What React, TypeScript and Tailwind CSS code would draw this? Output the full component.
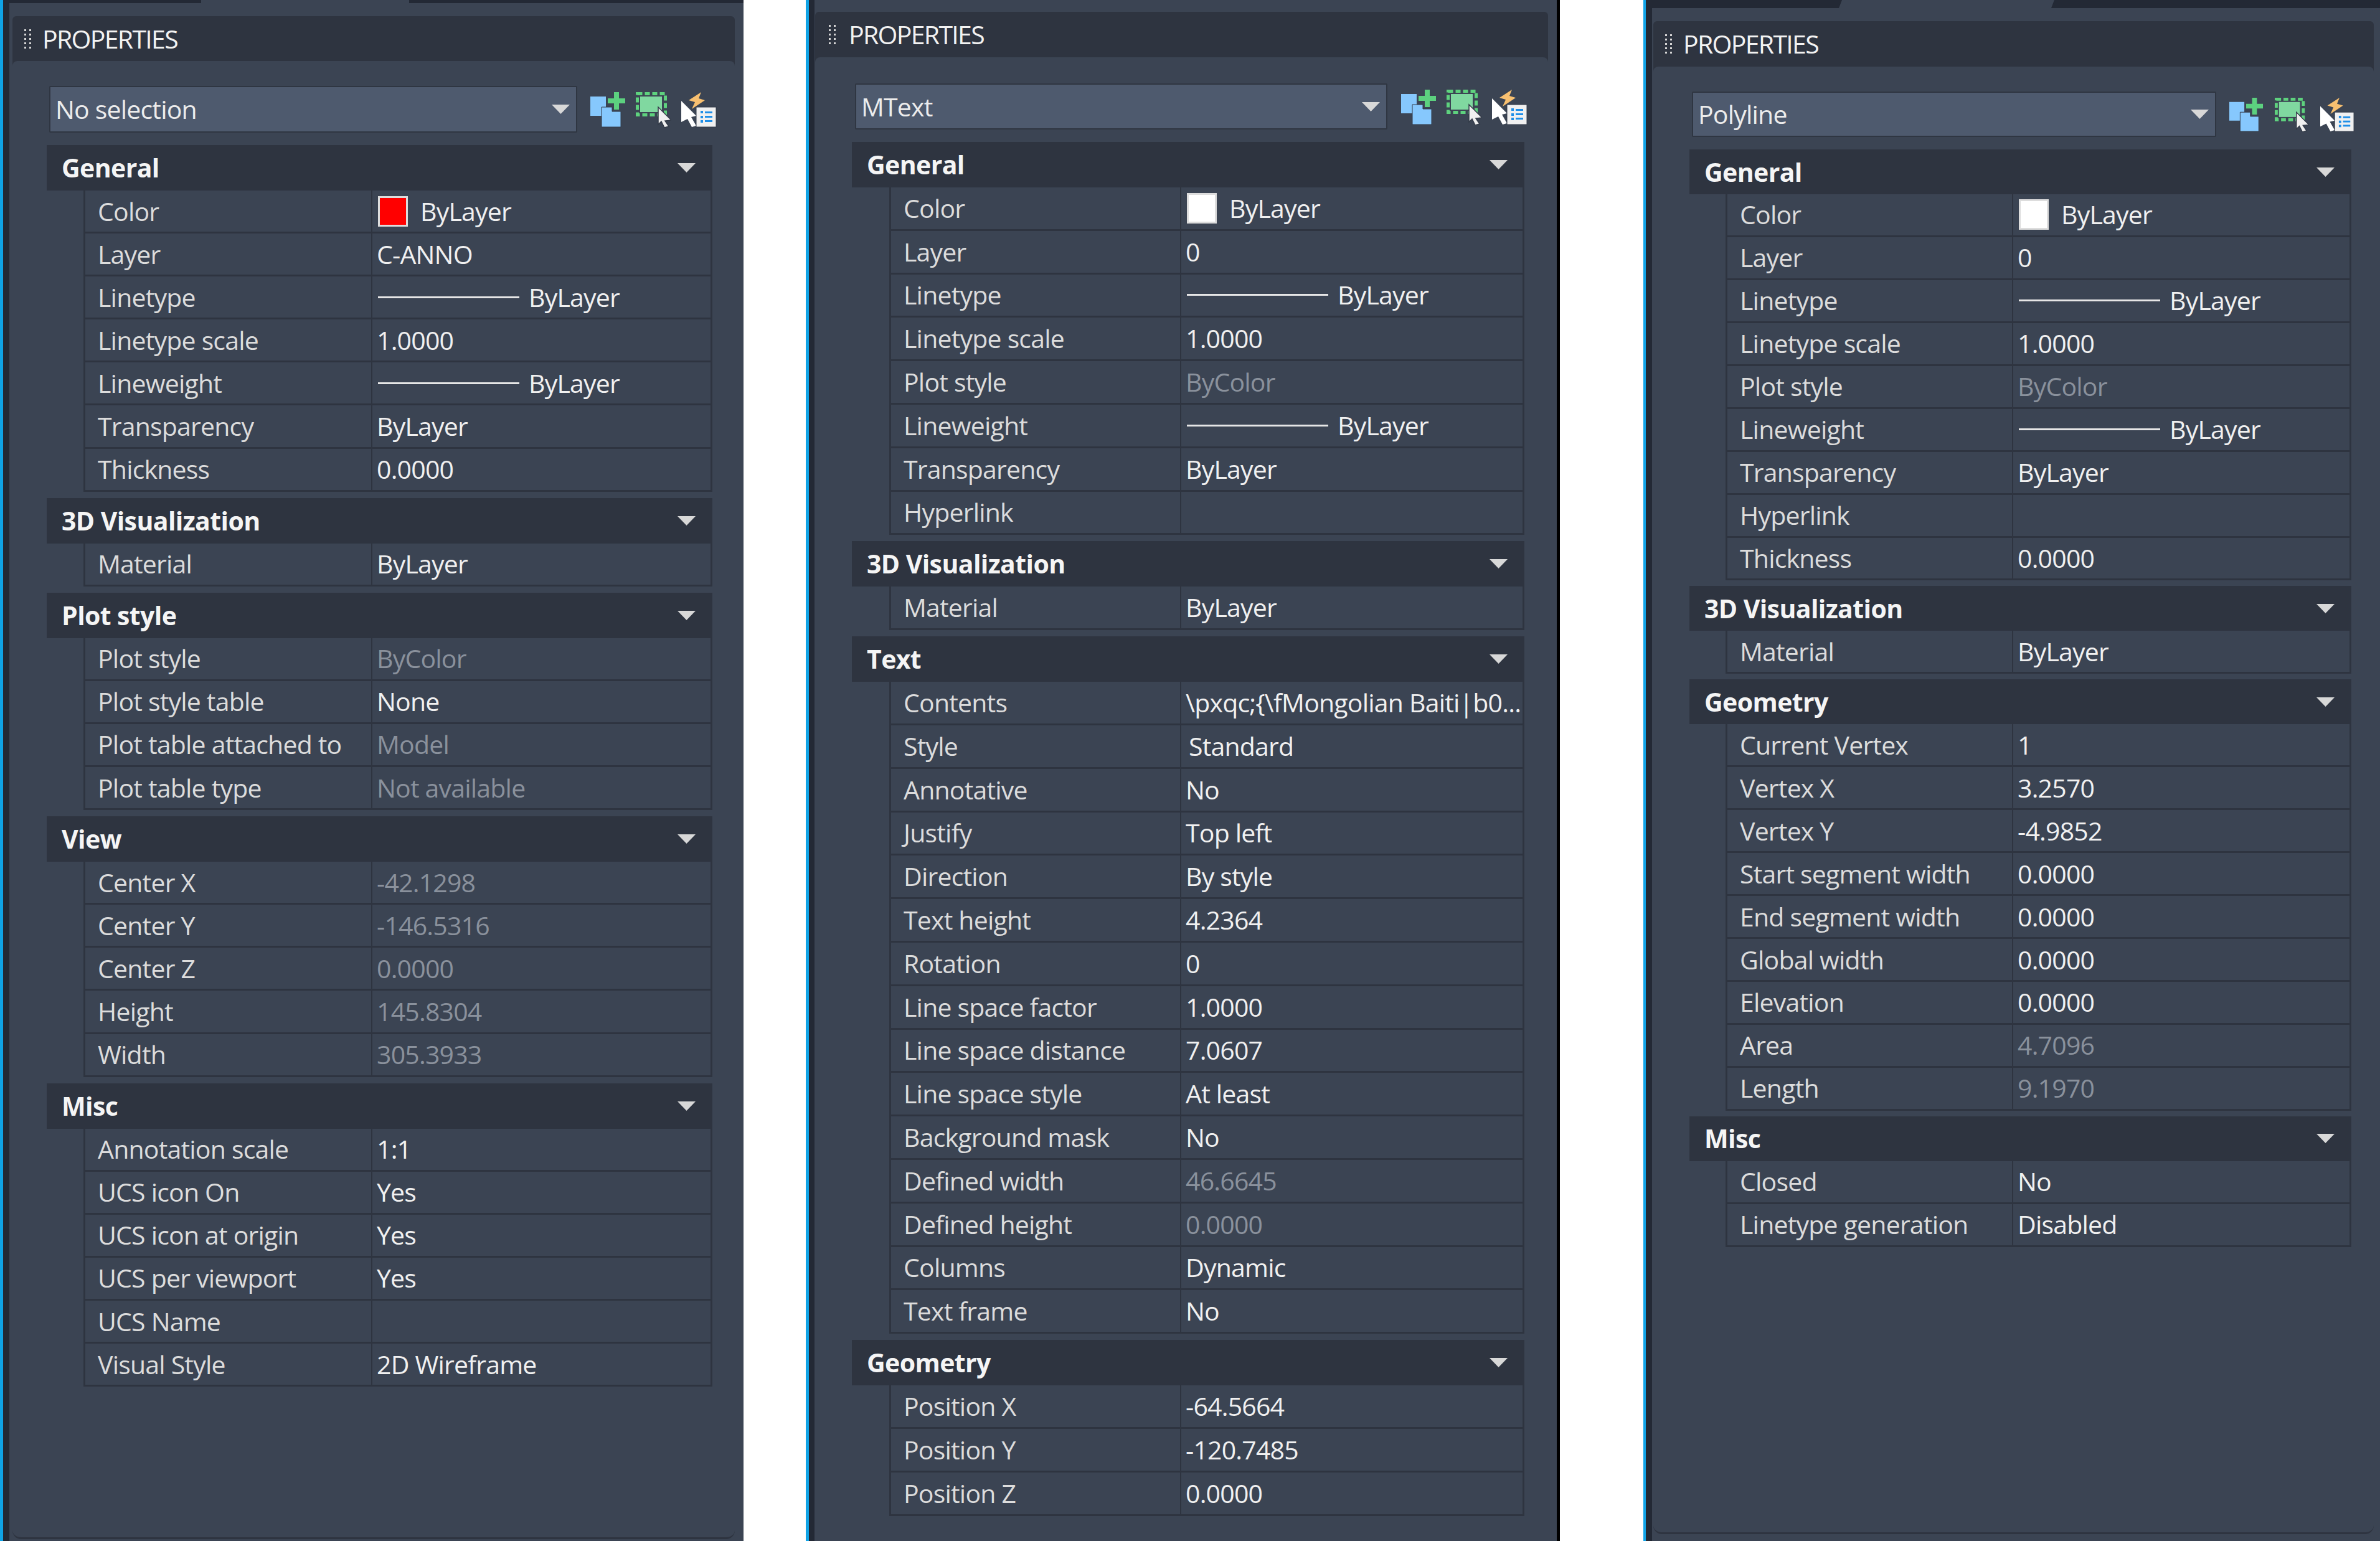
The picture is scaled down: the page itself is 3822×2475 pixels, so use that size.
import React from "react";

type Row = [string, string?, ("gray" | "line" | "red" | "white" | "indent")?];
type Group = { title: string; rows: Row[] };

const noSel: Group[] = [
  {
    title: "General",
    rows: [
      ["Color", "ByLayer", "red"],
      ["Layer", "C-ANNO"],
      ["Linetype", "ByLayer", "line"],
      ["Linetype scale", "1.0000"],
      ["Lineweight", "ByLayer", "line"],
      ["Transparency", "ByLayer"],
      ["Thickness", "0.0000"],
    ],
  },
  { title: "3D Visualization", rows: [["Material", "ByLayer"]] },
  {
    title: "Plot style",
    rows: [
      ["Plot style", "ByColor", "gray"],
      ["Plot style table", "None"],
      ["Plot table attached to", "Model", "gray"],
      ["Plot table type", "Not available", "gray"],
    ],
  },
  {
    title: "View",
    rows: [
      ["Center X", "-42.1298", "gray"],
      ["Center Y", "-146.5316", "gray"],
      ["Center Z", "0.0000", "gray"],
      ["Height", "145.8304", "gray"],
      ["Width", "305.3933", "gray"],
    ],
  },
  {
    title: "Misc",
    rows: [
      ["Annotation scale", "1:1"],
      ["UCS icon On", "Yes"],
      ["UCS icon at origin", "Yes"],
      ["UCS per viewport", "Yes"],
      ["UCS Name"],
      ["Visual Style", "2D Wireframe"],
    ],
  },
];

const mtext: Group[] = [
  {
    title: "General",
    rows: [
      ["Color", "ByLayer", "white"],
      ["Layer", "0"],
      ["Linetype", "ByLayer", "line"],
      ["Linetype scale", "1.0000"],
      ["Plot style", "ByColor", "gray"],
      ["Lineweight", "ByLayer", "line"],
      ["Transparency", "ByLayer"],
      ["Hyperlink"],
    ],
  },
  { title: "3D Visualization", rows: [["Material", "ByLayer"]] },
  {
    title: "Text",
    rows: [
      ["Contents", "\\pxqc;{\\fMongolian Baiti|b0..."],
      ["Style", "Standard", "indent"],
      ["Annotative", "No"],
      ["Justify", "Top left"],
      ["Direction", "By style"],
      ["Text height", "4.2364"],
      ["Rotation", "0"],
      ["Line space factor", "1.0000"],
      ["Line space distance", "7.0607"],
      ["Line space style", "At least"],
      ["Background mask", "No"],
      ["Defined width", "46.6645", "gray"],
      ["Defined height", "0.0000", "gray"],
      ["Columns", "Dynamic"],
      ["Text frame", "No"],
    ],
  },
  {
    title: "Geometry",
    rows: [
      ["Position X", "-64.5664"],
      ["Position Y", "-120.7485"],
      ["Position Z", "0.0000"],
    ],
  },
];

const polyline: Group[] = [
  {
    title: "General",
    rows: [
      ["Color", "ByLayer", "white"],
      ["Layer", "0"],
      ["Linetype", "ByLayer", "line"],
      ["Linetype scale", "1.0000"],
      ["Plot style", "ByColor", "gray"],
      ["Lineweight", "ByLayer", "line"],
      ["Transparency", "ByLayer"],
      ["Hyperlink"],
      ["Thickness", "0.0000"],
    ],
  },
  { title: "3D Visualization", rows: [["Material", "ByLayer"]] },
  {
    title: "Geometry",
    rows: [
      ["Current Vertex", "1"],
      ["Vertex X", "3.2570"],
      ["Vertex Y", "-4.9852"],
      ["Start segment width", "0.0000"],
      ["End segment width", "0.0000"],
      ["Global width", "0.0000"],
      ["Elevation", "0.0000"],
      ["Area", "4.7096", "gray"],
      ["Length", "9.1970", "gray"],
    ],
  },
  {
    title: "Misc",
    rows: [
      ["Closed", "No"],
      ["Linetype generation", "Disabled"],
    ],
  },
];

function Arrow() {
  return (
    <svg viewBox="0 0 29 15" className="h-[15px] w-[29px] shrink-0">
      <path d="M0 0H29L14.5 15Z" fill="#d8d8d8" />
    </svg>
  );
}

function Grip() {
  const ys = [0, 7, 14, 21, 28];
  return (
    <svg viewBox="0 0 11 31" className="h-[31px] w-[11px] shrink-0">
      {ys.map((y) => (
        <g key={y} fill="#d6d6d6">
          <rect x="0" y={y} width="3" height="3" />
          <rect x="8" y={y} width="3" height="3" />
        </g>
      ))}
    </svg>
  );
}

function AddIcon({ cls }: { cls: string }) {
  return (
    <svg viewBox="0 0 57 57" className={cls}>
      <path d="M0 7H25V24H18V38H0Z" fill="#86c8fd" />
      <path d="M18 24H35V31H49V56H18Z" fill="#86c8fd" stroke="#333b48" strokeWidth="1" />
      <path d="M38 0H46V10H56V18H46V28H38V18H28V10H38Z" fill="#5cd17f" />
    </svg>
  );
}

function SelectIcon({ cls }: { cls: string }) {
  return (
    <svg viewBox="0 0 57 57" className={cls}>
      <rect x="2.5" y="2.5" width="45" height="34" fill="none" stroke="#5ed27e" strokeWidth="5" strokeDasharray="8 4" />
      <rect x="7" y="7" width="35" height="25" fill="#80d8a0" />
      <path d="M36 24L57 45L47 46L53 55L46 57L41 47L36 52Z" fill="#f0f0f0" stroke="#333b48" strokeWidth="1.5" />
    </svg>
  );
}

function QuickIcon({ cls }: { cls: string }) {
  return (
    <svg viewBox="0 0 57 57" className={cls}>
      <path d="M32 0L12 13L22 16L17 27L38 13L28 10Z" fill="#f8c070" />
      <path d="M0 14L24 38L16 40L24 54L17 56L10 43L0 48Z" fill="#ffffff" />
      <rect x="24" y="24" width="32" height="32" fill="#f0f0f0" stroke="#333b48" strokeWidth="1" />
      <g fill="#1f8fe8">
        <rect x="31" y="30" width="4" height="4" />
        <rect x="31" y="38" width="4" height="4" />
        <rect x="31" y="45" width="4" height="4" />
        <rect x="38" y="31" width="12" height="3" />
        <rect x="38" y="38" width="12" height="3" />
        <rect x="38" y="45" width="12" height="3" />
      </g>
    </svg>
  );
}

function Value({ row }: { row: Row }) {
  const [, value, kind] = row;
  if (kind === "line") {
    return (
      <div className="ml-[2px] flex items-center">
        <div className="h-[3px] w-[227px] bg-[#e6e6e6]" />
        <span className="ml-[15px]">{value}</span>
      </div>
    );
  }
  if (kind === "red" || kind === "white") {
    return (
      <div className="ml-[2px] flex items-center">
        <div className={`h-[49px] w-[48px] border-[3px] border-[#dddddd] ${kind === "red" ? "bg-[#ff0000]" : "bg-white"}`} />
        <span className="ml-[20px]">{value}</span>
      </div>
    );
  }
  if (kind === "indent") return <span className="ml-[5px]">{value}</span>;
  return <span className={kind === "gray" ? "text-[#8a919c]" : ""}>{value}</span>;
}

type Cfg = {
  name: string;
  groups: Group[];
  outer: string;
  rail: string;
  top?: React.ReactNode;
  titleBar: string;
  grip: string;
  body: string;
  dropRow: string;
  drop: string;
  iconGap: string;
  icon: string;
  groupWrap: string;
  head: string;
  rows: string;
  row: string;
  labelCell: string;
  valueCell: string;
  tableGap: string;
};

function Panel({ c }: { c: Cfg }) {
  return (
    <div className={`flex shrink-0 ${c.outer}`}>
      <div className={`shrink-0 bg-[#232935] ${c.rail}`} />
      <div className="flex min-w-0 flex-1 flex-col bg-[#3b4453]">
        {c.top}
        <div className={`flex shrink-0 items-center rounded-t-md bg-[#2e3440] ${c.titleBar}`}>
          <div className={c.grip}>
            <Grip />
          </div>
          <span className="tracking-[-1.7px] text-[#f2f2f2]">PROPERTIES</span>
        </div>
        <div className={`flex min-h-0 flex-1 flex-col ${c.body}`}>
          <div className="h-2 shrink-0 bg-[#2e3440]">
            <div className="h-full rounded-t-[10px] bg-[#3b4453]" />
          </div>
          <div className={`flex shrink-0 items-start ${c.dropRow}`}>
            <div className={`flex items-center justify-between rounded-[2px] border-[2px] border-[#2f3642] bg-[#4e5a6e] pl-2 pr-[10px] text-[#ececec] ${c.drop}`}>
              <span>{c.name}</span>
              <Arrow />
            </div>
            <div className={`flex pt-[10px] ${c.iconGap}`}>
              <AddIcon cls={c.icon} />
              <SelectIcon cls={c.icon} />
              <QuickIcon cls={c.icon} />
            </div>
          </div>
          <div className={`flex flex-col ${c.groupWrap} ${c.tableGap}`}>
            {c.groups.map((g) => (
              <div key={g.title}>
                <div className={`flex items-center justify-between bg-[#2e3440] pl-[24px] pr-[27px] font-bold tracking-[-0.6px] text-[#f5f5f5] ${c.head}`}>
                  <span>{g.title}</span>
                  <Arrow />
                </div>
                <div className={`border-l-[3px] border-[#2e3440] ${c.rows}`}>
                  {g.rows.map((r) => (
                    <div key={r[0]} className={`flex border-r-[3px] border-b-[3px] border-[#2e3440] ${c.row}`}>
                      <div className={`flex shrink-0 items-center border-r-[2px] border-[#2e3440] pl-[20px] text-[#dcdcdc] ${c.labelCell}`}>{r[0]}</div>
                      <div className={`flex min-w-0 flex-1 items-center text-[#f0f0f0] ${c.valueCell}`}>
                        <Value row={r} />
                      </div>
                    </div>
                  ))}
                </div>
              </div>
            ))}
          </div>
        </div>
      </div>
    </div>
  );
}

const panels: Cfg[] = [
  {
    name: "No selection",
    groups: noSel,
    outer: "w-[1194px] border-l-[5px] border-[#10a3e6]",
    rail: "w-[10px]",
    top: (
      <div className="flex h-[5px] shrink-0">
        <div className="w-[308px] bg-[#232935]" />
        <div className="w-[334px]" />
        <div className="flex-1 bg-[#232935]" />
      </div>
    ),
    titleBar: "mt-[21px] ml-[5px] mr-[14px] h-[72px]",
    grip: "ml-[19px] mr-[18px]",
    body: "ml-[5px] mr-[14px] mb-[3px] rounded-b-[14px] border-b-[3px] border-[#2e3440]",
    dropRow: "pt-[32px] pl-[59px]",
    drop: "h-[75px] w-[848px]",
    iconGap: "ml-[21px] gap-[16px]",
    icon: "h-[57px] w-[57px]",
    groupWrap: "ml-[55px] w-[1069px]",
    head: "h-[73px]",
    rows: "ml-[59px]",
    row: "h-[69.1px]",
    labelCell: "w-[461px]",
    valueCell: "pl-[7px]",
    tableGap: "mt-[20px] gap-[10px]",
  },
  {
    name: "MText",
    groups: mtext,
    outer: "ml-[100px] w-[1211px] border-l-[5px] border-r-[5px] border-l-[#10a3e6] border-r-black",
    rail: "w-[9px]",
    titleBar: "mt-[19px] ml-[1px] mr-[14px] h-[73px]",
    grip: "ml-[22px] mr-[21px]",
    body: "ml-[1px] mr-[14px]",
    dropRow: "pt-[34px] pl-[64px]",
    drop: "h-[74px] w-[855px]",
    iconGap: "ml-[22px] gap-[16px]",
    icon: "h-[57px] w-[57px]",
    groupWrap: "ml-[59px] w-[1080px]",
    head: "h-[73px]",
    rows: "ml-[60px]",
    row: "h-[69.8px]",
    labelCell: "w-[466px]",
    valueCell: "pl-[7px]",
    tableGap: "mt-[20px] gap-[10px]",
  },
  {
    name: "Polyline",
    groups: polyline,
    outer: "ml-[134px] flex-1 border-l-[4px] border-[#10a3e6]",
    rail: "w-[10px]",
    top: (
      <div className="flex h-[13px] shrink-0">
        <div className="w-[305px] bg-[#232935] [clip-path:polygon(0_0,100%_0,calc(100%-5px)_100%,0_100%)]" />
        <div className="w-[336px]" />
        <div className="flex-1 bg-[#232935] [clip-path:polygon(5px_0,100%_0,100%_100%,0_100%)]" />
      </div>
    ),
    titleBar: "mt-[21px] ml-[2px] mr-[10px] h-[73px]",
    grip: "ml-[19px] mr-[18px]",
    body: "ml-[2px] mr-[10px] mb-[11px] rounded-b-[14px] border-b-[3px] border-[#2e3440]",
    dropRow: "pt-[32px] pl-[62px]",
    drop: "h-[73px] w-[842px]",
    iconGap: "ml-[21px] gap-[18px]",
    icon: "h-[55px] w-[55px]",
    groupWrap: "ml-[58px] w-[1063px]",
    head: "h-[72px]",
    rows: "ml-[58px]",
    row: "h-[68.95px]",
    labelCell: "w-[459px]",
    valueCell: "pl-[7px]",
    tableGap: "mt-[20px] gap-[9px]",
  },
];

export default function App() {
  return (
    <div className="flex h-[2475px] w-[3822px] overflow-hidden bg-white font-['Open_Sans','Liberation_Sans',sans-serif] text-[41px] leading-none tracking-[-0.8px]">
      {panels.map((c) => (
        <Panel key={c.name} c={c} />
      ))}
    </div>
  );
}
